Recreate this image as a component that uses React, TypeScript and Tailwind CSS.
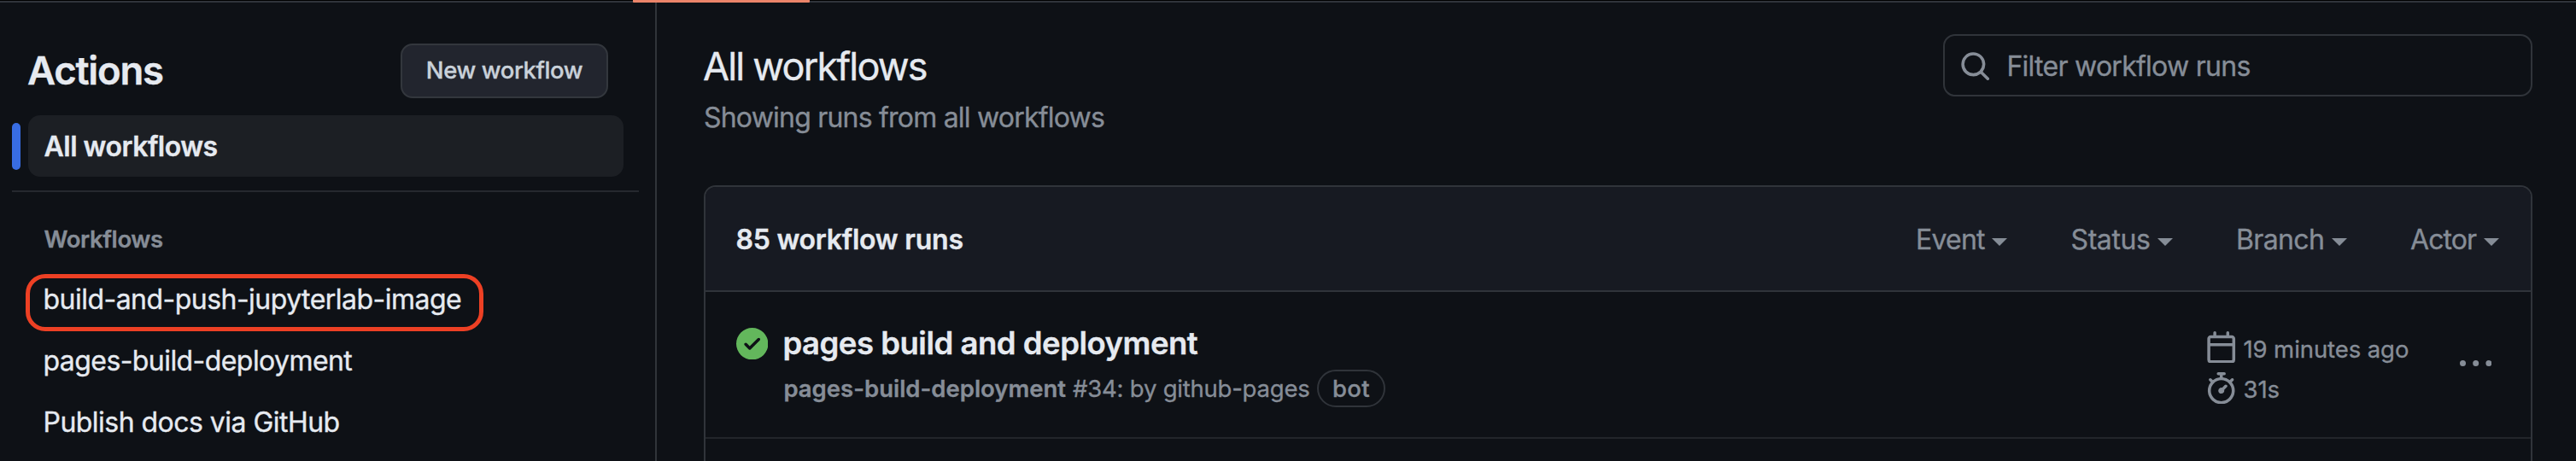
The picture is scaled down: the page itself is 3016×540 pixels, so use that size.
import type { ReactNode } from 'react';

type IconProps = { d: string; className?: string };

function Icon({ d, className = '' }: IconProps) {
  return (
    <svg viewBox="0 0 16 16" fill="currentColor" className={`h-[37.4px] w-[37.4px] shrink-0 ${className}`}>
      <path fillRule="evenodd" d={d} />
    </svg>
  );
}

const SEARCH =
  'M10.68 11.74a6 6 0 0 1-7.922-8.982 6 6 0 0 1 8.982 7.922l3.04 3.04a.749.749 0 0 1-.326 1.275.749.749 0 0 1-.734-.215ZM11.5 7a4.499 4.499 0 1 0-8.997 0A4.499 4.499 0 0 0 11.5 7Z';
const CHECK =
  'M8 16A8 8 0 1 1 8 0a8 8 0 0 1 0 16Zm3.78-9.72a.751.751 0 0 0-.018-1.042.751.751 0 0 0-1.042-.018L6.75 9.19 5.28 7.72a.751.751 0 0 0-1.042.018.751.751 0 0 0-.018 1.042l2 2a.75.75 0 0 0 1.06 0Z';
const CALENDAR =
  'M4.75 0a.75.75 0 0 1 .75.75V2h5V.75a.75.75 0 0 1 1.5 0V2h1.25c.966 0 1.75.784 1.75 1.75v10.5A1.75 1.75 0 0 1 13.25 16H2.75A1.75 1.75 0 0 1 1 14.25V3.75C1 2.784 1.784 2 2.75 2H4V.75A.75.75 0 0 1 4.75 0ZM2.5 7.5v6.75c0 .138.112.25.25.25h10.5a.25.25 0 0 0 .25-.25V7.5Zm10.75-4H2.75a.25.25 0 0 0-.25.25V6h11V3.75a.25.25 0 0 0-.25-.25Z';
const STOPWATCH =
  'M5.75.75A.75.75 0 0 1 6.5 0h3a.75.75 0 0 1 0 1.5h-.75v1l-.001.041a6.724 6.724 0 0 1 3.464 1.435l.007-.006.75-.75a.749.749 0 0 1 1.275.326.749.749 0 0 1-.215.734l-.75.75-.006.007a6.75 6.75 0 1 1-10.548 0L2.72 5.03l-.75-.75a.751.751 0 0 1 .018-1.042.751.751 0 0 1 1.042-.018l.75.75.007.006A6.72 6.72 0 0 1 7.25 2.541V1.5H6.5a.75.75 0 0 1-.75-.75ZM8 14.5a5.25 5.25 0 1 0-.001-10.501A5.25 5.25 0 0 0 8 14.5Zm.389-6.7 1.33-1.33a.75.75 0 1 1 1.061 1.06L9.45 8.861A1.503 1.503 0 0 1 8 10.75a1.499 1.499 0 1 1 .389-2.95Z';
const KEBAB =
  'M0 7.5a1.5 1.5 0 1 0 3 0a1.5 1.5 0 1 0-3 0ZM6.5 7.5a1.5 1.5 0 1 0 3 0a1.5 1.5 0 1 0-3 0ZM13 7.5a1.5 1.5 0 1 0 3 0a1.5 1.5 0 1 0-3 0Z';

function WorkflowLink({ children, className, highlighted }: { children: ReactNode; className: string; highlighted?: boolean }) {
  return (
    <li className={`relative flex h-[72px] items-center pl-[50.5px] text-[32px] leading-[40px] ${className}`}>
      {children}
      {highlighted && (
        <span className="absolute top-[6px] left-[30px] h-[67px] w-[536px] rounded-[23px] border-[5px] border-[#ed4024]" />
      )}
    </li>
  );
}

function Filter({ label, className }: { label: string; className: string }) {
  return (
    <button className={`flex items-center gap-[8.5px] text-[32px] leading-[40px] text-[#868d97] ${className}`}>
      <span>{label}</span>
      <svg viewBox="0 0 18 9" className="mt-[6px] h-[9px] w-[18px]" fill="currentColor">
        <path d="M0 0h18L9 9Z" />
      </svg>
    </button>
  );
}

function Sidebar() {
  return (
    <aside className="w-[769px] shrink-0 border-r-2 border-[#30343a]">
      <div className="mt-[48px] flex h-[64px] items-center justify-between pr-[55px] pl-[32px]">
        <h2 className="text-[45.5px] leading-[54px] font-semibold tracking-[-1.24px]">Actions</h2>
        <button className="flex h-[64px] w-[243px] items-center justify-center rounded-[14px] border-2 border-[#33373d] bg-[#22252e] text-[27.5px] font-medium tracking-[-0.41px] text-[#c9d1d9]">
          New workflow
        </button>
      </div>
      <div className="mt-[20px] flex h-[72px] items-center gap-[9px] pl-[14px]">
        <span className="h-[55px] w-[10px] rounded-[5px] bg-[#386de3]" />
        <a className="flex h-[72px] w-[697px] items-center rounded-[14px] bg-[#1c1f24] pt-[1px] pl-[18.5px] text-[32px] leading-[40px] font-semibold tracking-[-0.5px]">
          All workflows
        </a>
      </div>
      <hr className="mt-[16px] mr-[19px] ml-[14px] h-[2px] border-0 bg-[#26292f]" />
      <h3 className="mt-[35px] pl-[51.5px] text-[27.5px] leading-[40px] font-semibold tracking-[-0.4px] text-[#868d97]">
        Workflows
      </h3>
      <ul className="mt-[15px]">
        <WorkflowLink className="tracking-[-0.53px]" highlighted>build-and-push-jupyterlab-image</WorkflowLink>
        <WorkflowLink className="tracking-[-0.57px]">pages-build-deployment</WorkflowLink>
        <WorkflowLink className="tracking-[-0.53px]">Publish docs via GitHub</WorkflowLink>
      </ul>
    </aside>
  );
}

function RunRow() {
  return (
    <div className="flex h-[172px] items-start border-b-2 border-[#22252a] pl-[36px] text-[#868d97]">
      <Icon d={CHECK} className="mt-[42px] text-[#63b75c]" />
      <div className="mt-[35px] ml-[17px]">
        <h3 className="h-[50px] text-[36.5px] leading-[50px] font-semibold tracking-[-0.49px] text-[#e6eaf0]">
          pages build and deployment
        </h3>
        <div className="mt-[6px] flex h-[44px] items-center pl-[1px] text-[27.5px] leading-[40px]">
          <span className="font-semibold">pages-build-deployment</span>
          <span className="ml-[8px] tracking-[-0.22px]">#34: by github-pages</span>
          <span className="ml-[8.5px] flex h-[44px] w-[80px] items-center justify-center rounded-[22px] border-2 border-[#30343a] font-medium tracking-[0.4px]">
            bot
          </span>
        </div>
      </div>
      <div className="mt-[46px] ml-auto flex w-[298px] flex-col gap-[10.6px] text-[27.5px] leading-[32px]">
        <div className="flex h-[37.4px] items-center gap-[7.4px]">
          <Icon d={CALENDAR} />
          <span className="pt-[5px] tracking-[-0.08px]">19 minutes ago</span>
        </div>
        <div className="flex h-[37.4px] items-center gap-[7.4px]">
          <Icon d={STOPWATCH} />
          <span className="pt-[3px]">31s</span>
        </div>
      </div>
      <Icon d={KEBAB} className="mt-[66px] mr-[46px]" />
    </div>
  );
}

export default function App() {
  return (
    <div className="flex h-[540px] w-[3016px] flex-col overflow-hidden bg-[#0e1116] font-['Inter',sans-serif] text-[#e6eaf0] [-webkit-text-stroke:0.35px]">
      <div className="relative h-[3px] shrink-0 border-b-2 border-[#30343a] bg-black">
        <span className="absolute top-0 left-[741px] h-[3px] w-[207px] rounded-b-[1px] bg-[#eb8469]" />
      </div>
      <div className="flex h-[537px]">
        <Sidebar />
        <main className="flex flex-1 flex-col pt-[37px] pr-[51px] pl-[55px]">
          <div className="flex h-[177px] shrink-0 items-start justify-between">
            <div className="pt-[10px]">
              <h1 className="-ml-[1px] text-[45px] leading-[55px] tracking-[-1.8px]">All workflows</h1>
              <p className="mt-[13px] text-[32px] leading-[40px] tracking-[-0.79px] text-[#868d97]">
                Showing runs from all workflows
              </p>
            </div>
            <div className="flex h-[73px] w-[690px] items-center rounded-[14px] border-2 border-[#30343a] pl-[17px] text-[#868d97]">
              <Icon d={SEARCH} className="mt-[3px]" />
              <span className="pt-[2px] pl-[18px] text-[32px] leading-[40px] tracking-[-0.73px]">Filter workflow runs</span>
            </div>
          </div>
          <section className="flex-1 overflow-hidden rounded-t-[14px] border-2 border-b-0 border-[#30343a]">
            <header className="flex h-[123px] items-center justify-between border-b-2 border-[#30343a] bg-[#171a22] pl-[35.5px]">
              <h2 className="pt-[2px] text-[32px] leading-[40px] font-semibold tracking-[-0.24px]">85 workflow runs</h2>
              <div className="flex pt-[2px]">
                <Filter label="Event" className="w-[181.5px] tracking-[-0.79px]" />
                <Filter label="Status" className="w-[193.5px] tracking-[-0.4px]" />
                <Filter label="Branch" className="w-[204px] tracking-[-0.63px]" />
                <Filter label="Actor" className="w-[141px] tracking-[-0.9px]" />
              </div>
            </header>
            <RunRow />
          </section>
        </main>
      </div>
    </div>
  );
}
